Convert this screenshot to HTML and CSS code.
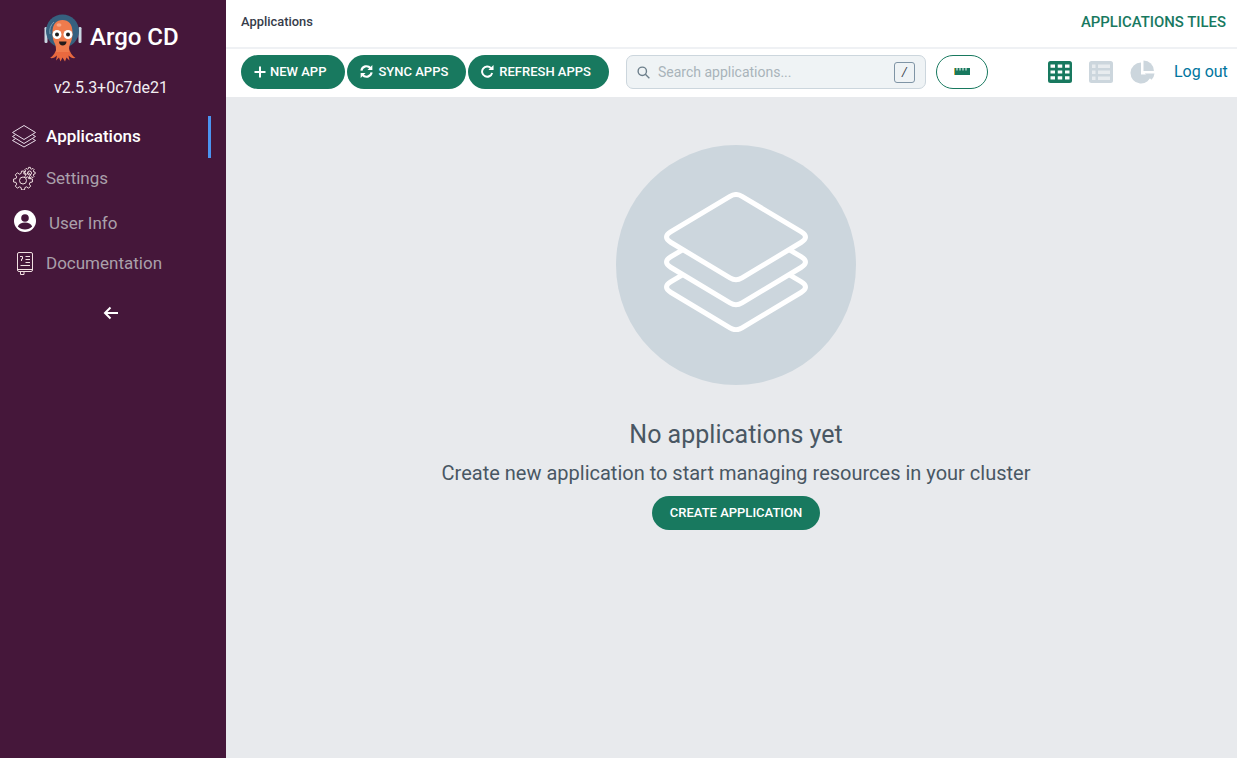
FILE: index.html
```html
<!DOCTYPE html>
<html lang="en">
<head>
<meta charset="utf-8">
<title>Applications - Argo CD</title>
<link rel="stylesheet" href="styles.css">
</head>
<body>
<div class="app">
  <aside class="sidebar">
    <div class="brand">
      <svg class="logo" viewBox="0 0 40 50" width="40" height="50">
        <rect x="1.500" y="15" width="3" height="16" rx="1.200" fill="#c9d6e2"/>
        <rect x="35.500" y="15" width="3" height="16" rx="1.200" fill="#c9d6e2"/>
        <circle cx="19.500" cy="19" r="16.500" fill="#36607f"/>
        <path d="M7 22a13 13 0 0 1 4-12" fill="none" stroke="#7d9fb5" stroke-width="1"/>
        <path d="M14 35c-1 5-4 9-7 11 3 .5 5-.5 7-2.500l-1 5 3-3 1.500 4 2-4 2.500 4 1.500-4 3 3-1-5c2 2 4 3 7 2.500-3-2-6-6-7-11z" fill="#e9693f"/>
        <path d="M9.500 20c0-8 4-12 10-12s10 4 10 12c0 6-1 9-2.500 12-1 2-1 5-1 8H13c0-3 0-6-1-8-1.500-3-2.500-6-2.500-12z" fill="#ef7b4d"/>
        <ellipse cx="16" cy="13" rx="2.500" ry="1.800" fill="#f7a583"/>
        <circle cx="14" cy="22.500" r="4.500" fill="#fff"/>
        <circle cx="25" cy="22.500" r="4.500" fill="#fff"/>
        <circle cx="14" cy="22.500" r="2" fill="#1d1d1d"/>
        <circle cx="25" cy="22.500" r="2" fill="#1d1d1d"/>
        <path d="M16 29.500h7.500c0 2.500-1.800 4-3.800 4s-3.700-1.500-3.700-4z" fill="#231a1a"/>
      </svg>
      <span class="brand-name">Argo CD</span>
    </div>
    <div class="version">v2.5.3+0c7de21</div>
    <nav class="nav">
      <a class="nav-item active">
        <svg class="nav-icon" viewBox="0 0 26 24" width="26" height="24" fill="none" stroke="#e8dce8" stroke-width="1" stroke-linejoin="round">
          <path d="M13 1.500 24.500 8.500 13 15.500 1.500 8.500z"/>
          <path d="M4.500 10.700 1.500 12.500 13 19.500 24.500 12.500 21.500 10.700"/>
          <path d="M4.500 14.700 1.500 16.500 13 23 24.500 16.500 21.500 14.700"/>
        </svg>
        <span>Applications</span>
      </a>
      <a class="nav-item">
        <svg class="nav-icon" viewBox="0 0 26 24" width="26" height="24" fill="none" stroke="#f0dfe0" stroke-width="1">
          <defs>
            <path id="gear" d="M7.050-1.900 9.400-1.500 9.400 1.500 7.050 1.900 6.300 3.650 7.700 5.600 5.600 7.700 3.650 6.300 1.900 7.050 1.500 9.400-1.500 9.400-1.900 7.050-3.650 6.300-5.600 7.700-7.700 5.600-6.300 3.650-7.050 1.900-9.400 1.500-9.400-1.500-7.050-1.900-6.300-3.650-7.700-5.600-5.600-7.700-3.650-6.300-1.900-7.050-1.500-9.400 1.500-9.400 1.900-7.050 3.650-6.300 5.600-7.700 7.700-5.600 6.300-3.650z" vector-effect="non-scaling-stroke"/>
          </defs>
          <use href="#gear" transform="translate(12 14.500)"/>
          <circle cx="12" cy="14.500" r="3.500"/>
          <use href="#gear" transform="translate(18.500 7) scale(.6)"/>
          <circle cx="18.500" cy="7" r="2"/>
        </svg>
        <span>Settings</span>
      </a>
      <a class="nav-item user">
        <svg class="user-icon" viewBox="0 0 22 22" width="22" height="22">
          <circle cx="11" cy="11" r="11" fill="#fff"/>
          <circle cx="11" cy="8" r="3.800" fill="#45173a"/>
          <path d="M3.800 16.500c1-2.800 4-4 7.200-4s6.200 1.200 7.200 4c-1.800 2-4.400 3-7.200 3s-5.400-1-7.200-3z" fill="#45173a"/>
        </svg>
        <span>User Info</span>
      </a>
      <a class="nav-item docs">
        <svg class="nav-icon" viewBox="0 0 26 24" width="26" height="24" fill="none" stroke="#f0dfe0" stroke-width="1">
          <rect x="6.500" y="1.500" width="15" height="19" rx="1.500"/>
          <path d="M6.500 18.500h15M9.500 20.500v3h3.500v-3"/>
          <path d="M14.500 5.500h4.500M14.500 8.500h4.500M14.500 11.500h4.500M9.500 14.500h9.500M9 5.500h2.500v2.500h-1v2"/>
        </svg>
        <span>Documentation</span>
      </a>
    </nav>
    <div class="collapse">
      <svg viewBox="0 0 16 14" width="16" height="14" fill="none" stroke="#fff" stroke-width="2">
        <path d="M15 7H2M7.500 1.500 2 7l5.500 5.500"/>
      </svg>
    </div>
  </aside>
  <main class="main">
    <header class="topbar">
      <span class="crumb">Applications</span>
      <span class="page-title">APPLICATIONS TILES</span>
    </header>
    <div class="toolbar">
      <div class="actions">
        <button class="btn btn-new">
          <svg class="plus" viewBox="0 0 12 12" width="12" height="12" fill="none" stroke="#fff" stroke-width="2"><path d="M6 .5v11M.5 6h11"/></svg>
          NEW APP
        </button>
        <button class="btn">
          <svg viewBox="0 0 14 14" width="13" height="13" fill="none" stroke="#fff" stroke-width="2.300"><path d="M1.500 6a5.500 5.500 0 0 1 9.800-2.500M12.500 8a5.500 5.500 0 0 1-9.800 2.500"/><path d="M13.300 0v5.300H8zM.7 14V8.700H6z" fill="#fff" stroke="none"/></svg>
          SYNC APPS
        </button>
        <button class="btn">
          <svg viewBox="0 0 14 14" width="13" height="13" fill="none" stroke="#fff" stroke-width="2.100"><path d="M12 8.500A5.500 5.500 0 1 1 10.800 3.500"/><path d="M13.500 0v5.500H8z" fill="#fff" stroke="none"/></svg>
          REFRESH APPS
        </button>
      </div>
      <div class="search">
        <svg viewBox="0 0 14 14" width="13" height="13" fill="none" stroke="#6d7f8b" stroke-width="1.500"><circle cx="5.700" cy="5.700" r="4.500"/><path d="M9 9l4.300 4.300"/></svg>
        <span class="search-text">Search applications...</span>
        <kbd class="key">/</kbd>
      </div>
      <button class="ruler-btn">
        <svg viewBox="0 0 16 7" width="16" height="7"><rect width="16" height="7" fill="#18795f"/><path d="M3 0v2.500M6 0v2.500M9 0v2.500M12 0v2.500" stroke="#fff" stroke-width="1"/><rect width="1" height="7" fill="#d8a93c"/></svg>
      </button>
      <div class="views">
        <svg viewBox="0 0 24 22" width="24" height="22"><rect width="24" height="22" rx="2.500" fill="#18795f"/><path d="M2.500 3.500H7v3.200H2.500zM9.750 3.500h4.500v3.200h-4.500zM17 3.500h4.500v3.200H17zM2.500 9.400H7v3.200H2.500zM9.750 9.400h4.500v3.200h-4.500zM17 9.400h4.500v3.200H17zM2.500 15.300H7v3.200H2.500zM9.750 15.300h4.500v3.200h-4.500zM17 15.300h4.500v3.200H17z" fill="#fff"/></svg>
        <svg viewBox="0 0 24 22" width="24" height="22"><rect width="24" height="22" rx="2.500" fill="#ccd6dd"/><path d="M3 3.500h3.500V7H3zM9 3.500h12V7H9zM3 9.500h3.500V13H3zM9 9.500h12V13H9zM3 15.500h3.500V19H3zM9 15.500h12V19H9z" fill="#e8ecef"/></svg>
        <svg viewBox="0 0 26 24" width="26" height="24"><path d="M11 2.500a10.500 10.500 0 1 0 10.400 12H11z" fill="#ccd6dd"/><path d="M13.500 0.500a10.500 10.500 0 0 1 10.400 10.500H13.500z" fill="#ccd6dd"/><path d="M14.800 13.500H24.500a10.500 10.500 0 0 1-3 6.300z" fill="#ccd6dd"/></svg>
      </div>
      <a class="logout">Log out</a>
    </div>
    <section class="empty">
      <div class="empty-circle">
        <svg class="empty-icon" viewBox="0 0 144 140" width="144" height="140" fill="none" stroke="#fff" stroke-width="5" stroke-linejoin="round">
          <path d="M66 4.300Q72 .7 78 4.300L137 39.700Q146 45.100 137 50.500L78 85.900Q72 89.500 66 85.900L7 50.500Q-2 45.100 7 39.700z"/>
          <path d="M18 58.100L7 64.700Q-2 70.100 7 75.500L66 110.900Q72 114.500 78 110.900L137 75.500Q146 70.100 137 64.700L126 58.100"/>
          <path d="M18 83.100L7 89.700Q-2 95.100 7 100.500L66 135.900Q72 139.500 78 135.900L137 100.500Q146 95.100 137 89.700L126 83.100"/>
        </svg>
      </div>
      <h2 class="empty-title">No applications yet</h2>
      <p class="empty-text">Create new application to start managing resources in your cluster</p>
      <button class="btn btn-create">CREATE APPLICATION</button>
    </section>
  </main>
</div>
</body>
</html>
```
FILE: styles.css
```css
* { box-sizing: border-box; }
html, body { margin: 0; height: 100%; overflow: hidden; }
body { font-family: Roboto, "Liberation Sans", sans-serif; color: #495763; }
.app { display: flex; height: 758px; }

.sidebar { width: 226px; flex: none; background: #45173a; color: #fff; display: flex; flex-direction: column; }
.brand { display: flex; align-items: center; height: 52px; margin-top: 11px; padding-left: 43px; gap: 7px; }
.logo { flex: none; }
.brand-name { font-size: 24px; font-weight: 500; line-height: 1; }
.version { height: 24px; margin-top: 13px; text-align: center; font-size: 16px; line-height: 24px; width: 222px; color: #f2eef2; }
.nav { margin-top: 16px; display: flex; flex-direction: column; }
.nav-item { display: flex; align-items: center; height: 42px; width: 211px; padding: 0 0 2px 11px; gap: 9px; font-size: 17px; color: #aaa0aa; }
.nav-item.active { color: #fff; font-weight: 500; border-right: 3px solid #4b94f0; }
.nav-item.user { height: 48px; padding-left: 14px; gap: 13px; }
.user-icon { margin-bottom: 4px; }
.nav-item.docs { height: 33px; padding-bottom: 4px; }
.collapse { display: flex; padding-left: 103px; margin-top: 25px; }

.main { flex: 1; min-width: 0; display: flex; flex-direction: column; background: #e8eaed; }
.topbar { height: 49px; flex: none; display: flex; align-items: center; justify-content: space-between; padding: 0 11px 5px 15px; background: #fff; border-bottom: 2px solid #eff1f4; }
.crumb { font-size: 12.900px; font-weight: 500; color: #363c4a; }
.page-title { font-size: 14.900px; font-weight: 500; color: #18795f; padding-top: 2px; }

.toolbar { height: 48px; flex: none; display: flex; align-items: center; padding: 0 9px 2px 15px; background: #fff; }
.actions { display: flex; gap: 2px; }
.btn { height: 34px; display: inline-flex; align-items: center; gap: 5px; padding: 0 18px 1px 13px; border: 0; border-radius: 17px; background: #18795f; color: #fff; font-family: inherit; font-size: 13px; font-weight: 500; white-space: nowrap; }
.btn-new { padding-right: 19px; }
.plus { margin-right: -1px; }
.search { width: 300px; height: 34px; margin-left: 17px; display: flex; align-items: center; padding: 0 10px; gap: 8px; background: #eff3f5; border: 1px solid #ccd6dd; border-radius: 7px; }
.search-text { flex: 1; font-size: 14px; color: #a9b3ba; }
.key { width: 21px; height: 21px; display: flex; align-items: center; justify-content: center; border: 1px solid #7f94a5; border-radius: 3px; font-family: inherit; font-size: 12px; font-style: italic; color: #363c4a; }
.ruler-btn { width: 52px; height: 34px; margin-left: 10px; display: flex; align-items: center; justify-content: center; padding: 0 0 2px; background: #fff; border: 1px solid #18795f; border-radius: 17px; }
.views { display: flex; align-items: center; gap: 17px; margin-left: 60px; }
.logout { margin: 0 0 2px 18px; font-size: 16px; color: #00759e; }

.empty { flex: 1; display: flex; flex-direction: column; align-items: center; padding: 48px 0 0 9px; }
.empty-circle { width: 240px; height: 240px; flex: none; display: flex; align-items: center; justify-content: center; border-radius: 50%; background: #ccd6dd; }
.empty-icon { margin-bottom: 6px; }
.empty-title { margin: 34px 0 0; font-size: 25px; line-height: 32px; font-weight: 400; color: #495763; }
.empty-text { margin: 10px 0 0; font-size: 20px; line-height: 24px; color: #495763; }
.btn-create { margin-top: 11px; padding: 0 18px 1px; }
```
